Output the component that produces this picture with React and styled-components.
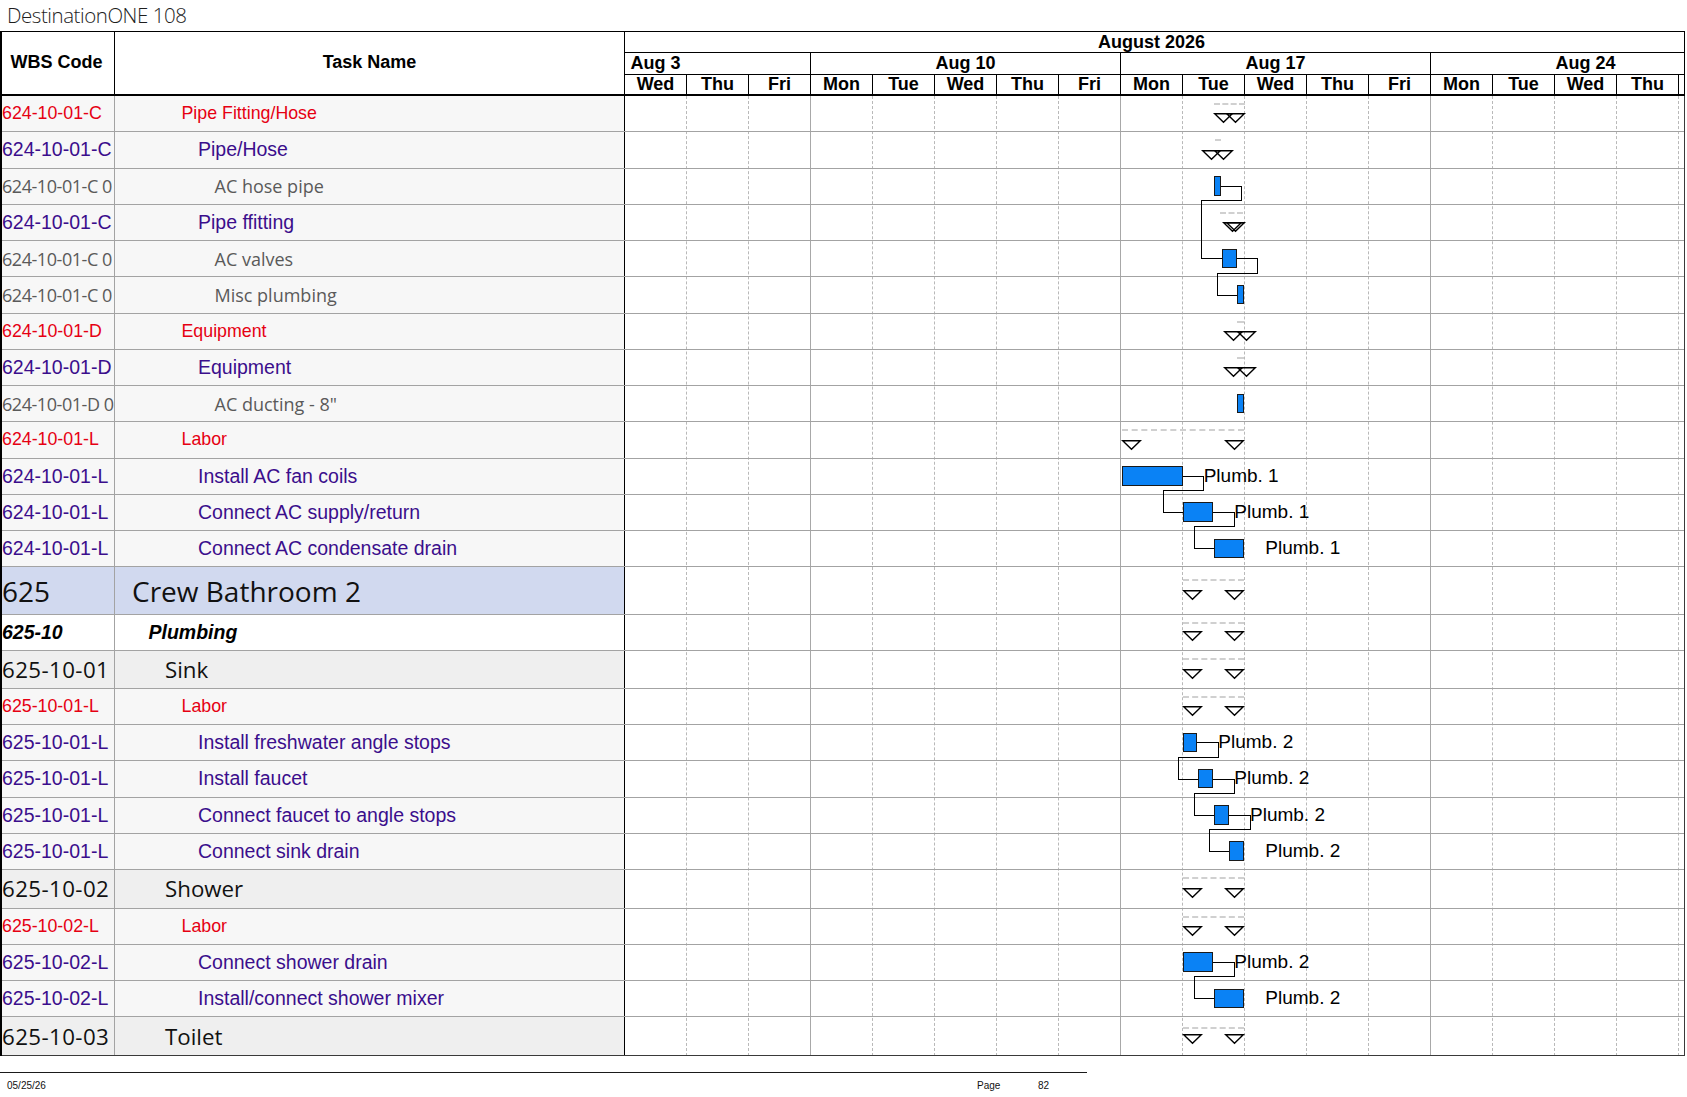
import React from 'react';
import styled, { createGlobalStyle, css } from 'styled-components';

const GlobalStyle = createGlobalStyle`
  html, body { margin: 0; padding: 0; background: #fff; }
  body { font-family: "Liberation Sans", Arial, sans-serif; color: #000; }
  *, *::before, *::after { box-sizing: border-box; }
`;

const DAY_W = 62;
const GANTT_INNER = 1059;
const SANS = `"Liberation Sans", Arial, sans-serif`;
const OPEN = `"Open Sans", "Noto Sans", sans-serif`;

const kinds = {
  red: css`font-family: ${SANS}; font-size: 17.8px; color: #e60012;`,
  purple: css`font-family: ${SANS}; font-size: 19.5px; color: #3b0e8c;`,
  gray: css`font-family: ${OPEN}; font-size: 18px; color: #5a5a5a;`,
  area: css`font-family: ${OPEN}; font-size: 28px; color: #111;`,
  group: css`font-family: ${SANS}; font-size: 19.5px; font-weight: bold; font-style: italic; color: #000;`,
  item: css`font-family: ${OPEN}; font-size: 22.3px; color: #111;`,
};

const codeTweak = {
  gray: css`letter-spacing: -0.45px;`,
  item: css`letter-spacing: 0.4px;`,
};

const rowBg = { area: '#d1d9ef', group: '#ffffff', item: '#efefef' };

const S1 = { s: 558.3, f: 619.3, dash: [558.3, 619.3] };

const rows = [
  { code: '624-10-01-C', name: 'Pipe Fitting/Hose', kind: 'red', level: 3, sum: { s: 589, f: 620, dash: [589, 620], t: 16.5 } },
  { code: '624-10-01-C', name: 'Pipe/Hose', kind: 'purple', level: 4, sum: { s: 576.7, f: 608.3, dash: [590, 596] } },
  { code: '624-10-01-C 0', name: 'AC hose pipe', kind: 'gray', level: 5, bar: [589.3, 6.4] },
  { code: '624-10-01-C', name: 'Pipe ffitting', kind: 'purple', level: 4, sum: { s: 597.7, f: 620, dash: [595, 618] } },
  { code: '624-10-01-C 0', name: 'AC valves', kind: 'gray', level: 5, bar: [596.7, 15] },
  { code: '624-10-01-C 0', name: 'Misc plumbing', kind: 'gray', level: 5, bar: [612.3, 7] },
  { code: '624-10-01-D', name: 'Equipment', kind: 'red', level: 3, sum: { s: 599.3, f: 631, dash: [611.7, 619.3] } },
  { code: '624-10-01-D', name: 'Equipment', kind: 'purple', level: 4, sum: { s: 599.3, f: 631, dash: [611.7, 619.3] } },
  { code: '624-10-01-D 0', name: 'AC ducting - 8"', kind: 'gray', level: 5, bar: [612.3, 7] },
  { code: '624-10-01-L', name: 'Labor', kind: 'red', level: 3, sum: { s: 496.7, f: 619.3, dash: [496.7, 619.3] } },
  { code: '624-10-01-L', name: 'Install AC fan coils', kind: 'purple', level: 4, bar: [496.7, 61], label: 'Plumb. 1' },
  { code: '624-10-01-L', name: 'Connect AC supply/return', kind: 'purple', level: 4, bar: [558.3, 30], label: 'Plumb. 1' },
  { code: '624-10-01-L', name: 'Connect AC condensate drain', kind: 'purple', level: 4, bar: [589.3, 30], label: 'Plumb. 1' },
  { code: '625', name: 'Crew Bathroom 2', kind: 'area', level: 0, h: 47.5, sum: { ...S1, t: 22.75, d: 12 } },
  { code: '625-10', name: 'Plumbing', kind: 'group', level: 1, h: 36.5, sum: { ...S1, t: 16.5 } },
  { code: '625-10-01', name: 'Sink', kind: 'item', level: 2, h: 37.5, sum: { ...S1, t: 18 } },
  { code: '625-10-01-L', name: 'Labor', kind: 'red', level: 3, sum: S1 },
  { code: '625-10-01-L', name: 'Install freshwater angle stops', kind: 'purple', level: 4, bar: [558.3, 14], label: 'Plumb. 2' },
  { code: '625-10-01-L', name: 'Install faucet', kind: 'purple', level: 4, bar: [573.3, 15], label: 'Plumb. 2' },
  { code: '625-10-01-L', name: 'Connect faucet to angle stops', kind: 'purple', level: 4, bar: [589.3, 14.7], label: 'Plumb. 2' },
  { code: '625-10-01-L', name: 'Connect sink drain', kind: 'purple', level: 4, bar: [604.3, 15], label: 'Plumb. 2' },
  { code: '625-10-02', name: 'Shower', kind: 'item', level: 2, h: 38.5, sum: { ...S1, t: 18.3 } },
  { code: '625-10-02-L', name: 'Labor', kind: 'red', level: 3, sum: S1 },
  { code: '625-10-02-L', name: 'Connect shower drain', kind: 'purple', level: 4, bar: [558.3, 30], label: 'Plumb. 2' },
  { code: '625-10-02-L', name: 'Install/connect shower mixer', kind: 'purple', level: 4, bar: [589.3, 30], label: 'Plumb. 2' },
  { code: '625-10-03', name: 'Toilet', kind: 'item', level: 2, h: 38.5, sum: { ...S1, t: 17, d: 10 } },
].map((r) => ({ h: 36.25, ...r }));

const tops = [];
let acc = 0;
rows.forEach((r) => {
  tops.push(acc);
  acc += r.h;
});
const TOTAL_H = acc;

const links = [[2, 4], [4, 5], [10, 11], [11, 12], [17, 18], [18, 19], [19, 20], [23, 24]];

const px = (v) => Math.round(v) + 0.5;

const linkPaths = links.map(([a, b]) => {
  const A = rows[a].bar;
  const B = rows[b].bar;
  const ay = px(tops[a] + 17.25);
  const by = px(tops[b] + 17.25);
  const ax = Math.round(A[0] + A[1]);
  const x1 = px(A[0] + A[1] + 20.5);
  const ty = px(tops[a] + rows[a].h - 4.75);
  const x2 = px(B[0] - 20.5);
  const bx = Math.round(B[0]);
  return `M${ax} ${ay} H${x1} V${ty} H${x2} V${by} H${bx}`;
});

/* the last, clipped Friday column shows only a sliver without a readable label */
const days = ['Wed', 'Thu', 'Fri', 'Mon', 'Tue', 'Wed', 'Thu', 'Fri', 'Mon', 'Tue', 'Wed', 'Thu', 'Fri', 'Mon', 'Tue', 'Wed', 'Thu', ''];
const weekEnds = [2, 7, 12];
const weeks = ['Aug 3', 'Aug 10', 'Aug 17', 'Aug 24'];

/* ---------- layout ---------- */

const Page = styled.div`
  width: 1687px;
`;

const Title = styled.div`
  height: 31px;
  padding: 1px 0 0 7px;
  font-family: ${OPEN};
  font-weight: 300;
  font-size: 20.5px;
  letter-spacing: -0.45px;
  line-height: 28px;
  color: #1e1e1e;
  white-space: nowrap;
`;

const Table = styled.div`
  width: 1685px;
  border-left: 2px solid #000;
`;

const HeadRow = styled.div`
  display: flex;
  height: 65px;
  border-top: 1px solid #000;
  border-bottom: 2px solid #000;
`;

const HeadCell = styled.div`
  flex: 0 0 ${(p) => p.$w}px;
  display: flex;
  align-items: center;
  justify-content: center;
  border-right: 1px solid #000;
  font-family: ${SANS};
  font-weight: bold;
  font-size: 18px;
  padding: 0 ${(p) => p.$shift || 0}px 2px 0;
`;

const GanttHead = styled.div`
  flex: 0 0 1060px;
  display: flex;
  flex-direction: column;
  border-right: 1px solid #000;
  overflow: hidden;
  font-family: ${SANS};
  font-weight: bold;
  font-size: 18px;
`;

const MonthRow = styled.div`
  height: 21px;
  line-height: 20px;
  text-align: center;
  border-bottom: 1px solid #000;
  padding-right: 6px;
`;

const WeekRow = styled.div`
  height: 22px;
  border-bottom: 1px solid #000;
  overflow: hidden;
`;

const WeekTrack = styled.div`
  display: flex;
  margin-left: -${2 * DAY_W}px;
`;

const WeekCell = styled.div`
  flex: 0 0 ${5 * DAY_W}px;
  height: 21px;
  line-height: 21px;
  text-align: center;
  border-right: 1px solid #000;
`;

const DayRow = styled.div`
  display: flex;
  height: 19px;
  overflow: hidden;
`;

const DayCell = styled.div`
  flex: 0 0 ${DAY_W}px;
  line-height: 19px;
  text-align: center;
  border-right: 1px solid #000;
`;

const Body = styled.div`
  display: flex;
`;

const LeftBody = styled.div`
  flex: 0 0 623px;
  display: flex;
  flex-direction: column;
`;

const LeftRow = styled.div`
  display: flex;
  height: ${(p) => p.$h}px;
  background: ${(p) => rowBg[p.$kind] || '#f7f7f7'};
  border-bottom: 1px solid #a3a3a3;
  &:last-child { border-bottom-color: #3a3a3a; }
  ${(p) => kinds[p.$kind]}
`;

const CodeCell = styled.div`
  flex: 0 0 113px;
  display: flex;
  align-items: center;
  overflow: hidden;
  white-space: nowrap;
  border-right: 1px solid #a3a3a3;
  ${(p) => codeTweak[p.$kind]}
`;

const NameCell = styled.div`
  flex: 0 0 510px;
  display: flex;
  align-items: center;
  overflow: hidden;
  white-space: nowrap;
  padding-left: ${(p) => 17 + 16.5 * p.$level}px;
  border-right: 1px solid #000;
`;

const GanttBody = styled.div`
  flex: 0 0 1060px;
  position: relative;
  display: flex;
  flex-direction: column;
  border-right: 1px solid #3a3a3a;
  background: #fff;
`;

const GridLayer = styled.div`
  position: absolute;
  inset: 0;
  display: flex;
  overflow: hidden;
`;

const GridCol = styled.div`
  flex: 0 0 ${DAY_W}px;
  border-right: 1px ${(p) => (p.$week ? 'solid #a8a8a8' : 'dashed #b9b9b9')};
`;

const GanttRow = styled.div`
  position: relative;
  height: ${(p) => p.$h}px;
  border-bottom: 1px solid #a3a3a3;
  &:last-of-type { border-bottom-color: #3a3a3a; }
`;

const Bar = styled.div`
  position: absolute;
  top: 7.5px;
  height: 19.5px;
  background: #0a82f5;
  border: 1px solid #1a1a1a;
`;

const BarLabel = styled.div`
  position: absolute;
  top: 7px;
  font-family: ${SANS};
  font-size: 19px;
  line-height: 20px;
  color: #000;
  white-space: nowrap;
`;

const SumDash = styled.div`
  position: absolute;
  height: 0;
  border-top: 2px dashed #d0d0d0;
`;

const Tri = styled.svg`
  position: absolute;
  overflow: visible;
`;

const LinkLayer = styled.svg`
  position: absolute;
  top: 0;
  left: 0;
  pointer-events: none;
`;

const Footer = styled.div`
  width: 1087px;
  margin-top: 16px;
  border-top: 1px solid #1a1a1a;
  display: grid;
  grid-template-columns: 977px 61px auto;
  padding-top: 7px;
  font-family: ${SANS};
  font-size: 10px;
  line-height: 12px;
  color: #111;
`;

const FootDate = styled.div`
  padding-left: 7px;
`;

const FootText = styled.div``;

/* ---------- parts ---------- */

function Triangle({ x, top }) {
  return (
    <Tri style={{ left: x, top }} width="19" height="10" viewBox="0 0 19 10">
      <polygon points="0.7,0.7 18.3,0.7 9.5,9.3" fill="none" stroke="#000" strokeWidth="1.4" strokeLinejoin="miter" />
    </Tri>
  );
}

function Summary({ sum }) {
  const t = sum.t ?? 17.5;
  const d = sum.d ?? 7;
  return (
    <>
      <SumDash style={{ left: sum.dash[0], width: sum.dash[1] - sum.dash[0], top: d }} />
      <Triangle x={sum.s} top={t} />
      <Triangle x={sum.f - 19} top={t} />
    </>
  );
}

export default function App() {
  return (
    <>
      <GlobalStyle />
      <Page>
        <Title>DestinationONE 108</Title>
        <Table>
          <HeadRow>
            <HeadCell $w={113} $shift={3}>WBS Code</HeadCell>
            <HeadCell $w={510}>Task Name</HeadCell>
            <GanttHead>
              <MonthRow>August 2026</MonthRow>
              <WeekRow>
                <WeekTrack>
                  {weeks.map((w) => (
                    <WeekCell key={w}>{w}</WeekCell>
                  ))}
                </WeekTrack>
              </WeekRow>
              <DayRow>
                {days.map((d, i) => (
                  <DayCell key={i}>{d}</DayCell>
                ))}
              </DayRow>
            </GanttHead>
          </HeadRow>
          <Body>
            <LeftBody>
              {rows.map((r, i) => (
                <LeftRow key={i} $h={r.h} $kind={r.kind}>
                  <CodeCell $kind={r.kind}>{r.code}</CodeCell>
                  <NameCell $level={r.level}>{r.name}</NameCell>
                </LeftRow>
              ))}
            </LeftBody>
            <GanttBody>
              <GridLayer>
                {days.slice(0, 17).map((d, i) => (
                  <GridCol key={i} $week={weekEnds.includes(i)} />
                ))}
              </GridLayer>
              {rows.map((r, i) => (
                <GanttRow key={i} $h={r.h}>
                  {r.sum && <Summary sum={r.sum} />}
                  {r.bar && <Bar style={{ left: r.bar[0], width: r.bar[1] }} />}
                  {r.label && <BarLabel style={{ left: r.bar[0] + r.bar[1] + 21 }}>{r.label}</BarLabel>}
                </GanttRow>
              ))}
              <LinkLayer width={GANTT_INNER} height={TOTAL_H} viewBox={`0 0 ${GANTT_INNER} ${TOTAL_H}`}>
                {linkPaths.map((d, i) => (
                  <path key={i} d={d} fill="none" stroke="#000" strokeWidth="1" shapeRendering="crispEdges" />
                ))}
              </LinkLayer>
            </GanttBody>
          </Body>
        </Table>
        <Footer>
          <FootDate>05/25/26</FootDate>
          <FootText>Page</FootText>
          <FootText>82</FootText>
        </Footer>
      </Page>
    </>
  );
}
